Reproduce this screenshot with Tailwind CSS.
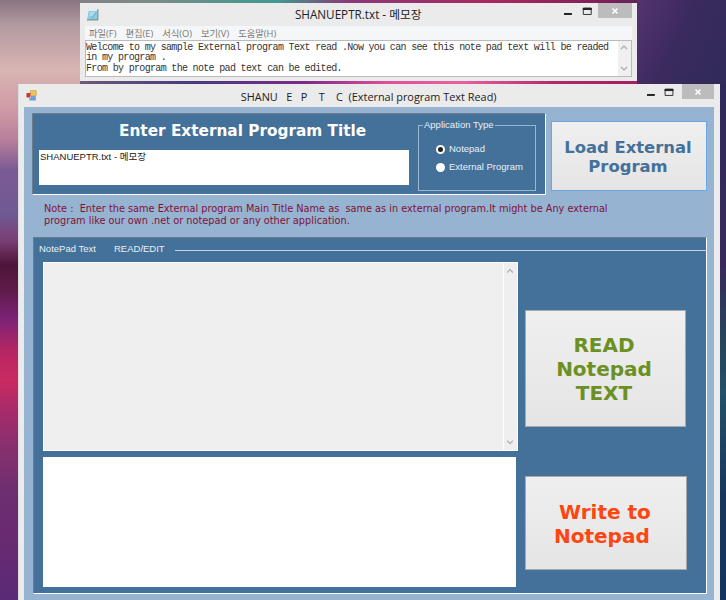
<!DOCTYPE html>
<html lang="ko">
<head>
<meta charset="utf-8">
<title>SHANU EPTC</title>
<script src="https://cdn.jsdelivr.net/npm/@tailwindcss/browser@4"></script>
</head>
<body class="overflow-hidden">
<main class="relative h-[600px] w-[726px] overflow-hidden bg-[#5c1842] font-['Open_Sans','Noto_Sans_CJK_KR',sans-serif] text-[#222]">
  <!-- desktop wallpaper -->
  <div class="absolute inset-0 bg-[linear-gradient(90deg,#8b7486_0%,#7d8a86_20%,#3f9a90_38%,#8a3a78_48%,#a8285e_68%,#7c1e58_84%,#35325f_93%,#3a2750_100%)]"></div>
  <div class="absolute top-0 left-0 h-full w-[80px] bg-[linear-gradient(180deg,#8a7482_0px,#b39aa0_25px,#d8b5b2_70px,#cf9aa6_110px,#b87f9a_140px,#7b5a94_170px,#705992_215px,#7a3f75_240px,#4e1538_265px,#5e1b4a_290px,#7c2377_320px,#b52663_350px,#c92a62_380px,#a82b6a_410px,#85306f_450px,#6e2f70_490px,#6a2a70_530px,#5a2a78_600px)]"></div>
  <div class="absolute top-[79px] left-[80px] h-[8px] w-[560px] bg-[linear-gradient(90deg,#6b5a78_0%,#473a80_20%,#7b2a88_40%,#e0509a_55%,#e861a0_68%,#b02868_85%,#a02060_100%)]"></div>
  <div class="absolute top-0 left-[637px] h-[90px] w-[89px] bg-[linear-gradient(115deg,#54336f,#3b2a5e_45%,#2f2b58)]"></div>
  <div class="absolute top-[84px] left-[720px] h-[516px] w-[6px] bg-[linear-gradient(180deg,#2f2a5b_0%,#372a5b_35%,#26455c_50%,#23506a_60%,#17365d_80%,#123460_100%)]"></div>

  <!-- notepad window -->
  <section class="absolute top-[3px] left-[80px] flex h-[78px] w-[557px] flex-col bg-[#ebebeb] px-[5px] pb-[4px]">
    <header class="flex h-[23px] shrink-0 items-start">
      <svg class="mt-[5px] ml-[2px] h-[13px] w-[12px]" viewBox="0 0 12 13"><path d="M2 1h9v11H0z" fill="#8fcbe0"/><path d="M2 1h9v2H2z" fill="#e3edf0"/><path d="M11 1v11H0" fill="none" stroke="#688892"/><path d="M3 5h5M2.500 7h4" stroke="#c4ecf6"/><path d="M5 10l4-5" stroke="#5caac8"/></svg>
      <h1 class="ml-[196px] w-[130px] text-[11.700px] leading-[23px] whitespace-pre">SHANUEPTR.txt - 메모장</h1>
      <svg class="mt-[2px] ml-[139px] h-[14px] w-[36px]" viewBox="0 0 36 14"><path d="M1 9h8" stroke="#222" stroke-width="2"/><path d="M20.500 3v6.500h8V3z" fill="none" stroke="#333"/><path d="M20 4h9" stroke="#222" stroke-width="2"/></svg>
      <div class="ml-auto flex h-[15px] w-[34px] items-center justify-center bg-[#bcbcbc]"><svg class="size-[6px]" viewBox="0 0 6 6"><path d="M.5 .5l5 5m0-5l-5 5" stroke="#fff" stroke-width="1.500"/></svg></div>
    </header>
    <nav class="flex h-[14px] shrink-0 gap-[9px] bg-[#f5f6f7] pl-[4px] text-[9.300px] leading-[15px] text-[#777]"><span>파일(F)</span><span>편집(E)</span><span>서식(O)</span><span>보기(V)</span><span>도움말(H)</span></nav>
    <div class="flex flex-1 justify-between border border-[#b9bcbf] bg-white">
      <p class="pt-[2px] font-['Liberation_Mono',monospace] text-[10px] leading-[10.300px] tracking-[-0.670px] whitespace-pre text-[#333]">Welcome to my sample External program Text read .Now you can see this note pad text will be readed
in my program .
From by program the note pad text can be edited.</p>
      <svg class="h-[35px] w-[13px] bg-[#f0f0f0]" viewBox="0 0 13 35"><path d="M3 8l3-3 3 3M3 26l3 3 3-3" fill="none" stroke="#aaa" stroke-width="1.200"/></svg>
    </div>
  </section>

  <!-- reader window -->
  <section class="absolute top-[84px] left-[18px] flex h-[530px] w-[702px] flex-col border-l border-[#dcdcdc] bg-[#ebebeb] pr-[6px] pl-[5px]">
    <header class="flex h-[23px] shrink-0 items-start">
      <svg class="mt-[6px] ml-[2px] size-[11px]" viewBox="0 0 11 11"><path d="M4.500 .5h6v5h-6z" fill="#efc456" stroke="#c99a38" stroke-width=".6"/><path d="M.5 3h4v4.500h-4z" fill="#c23a35"/><path d="M5 6h5v4.500H3.500V8H5z" fill="#6f9fd8"/></svg>
      <h2 class="mt-[2px] ml-[204px] w-[264px] text-[10.900px] leading-[22px] whitespace-pre">SHANU   E   P    T    C  (External program Text Read)</h2>
      <svg class="mt-[2px] ml-[147px] h-[14px] w-[36px]" viewBox="0 0 36 14"><path d="M1 9h8" stroke="#222" stroke-width="2"/><path d="M19.500 3v6.500h8V3z" fill="none" stroke="#333"/><path d="M19 4h9" stroke="#222" stroke-width="2"/></svg>
      <div class="ml-auto flex h-[15px] w-[33px] items-center justify-center bg-[#bcbcbc]"><svg class="size-[6px]" viewBox="0 0 6 6"><path d="M.5 .5l5 5m0-5l-5 5" stroke="#fff" stroke-width="1.500"/></svg></div>
    </header>
    <div class="flex-1 bg-[#97b3d2] pt-[6px] pl-[8px]">
      <div class="flex h-[82px] gap-[5px]">
        <div class="flex w-[514px] shrink-0 border border-t-[#6d7c8c] border-r-white border-b-white border-l-[#6d7c8c] bg-[#447199] pt-px pl-[6px]">
          <div class="w-[370px]">
            <h3 class="mt-[6px] pl-[80px] font-['DejaVu_Sans',sans-serif] text-[15.300px] leading-[20px] font-bold whitespace-pre text-white">Enter External Program Title</h3>
            <div class="mt-[9px] h-[35px] bg-white px-[1px] font-['Liberation_Sans','Noto_Sans_CJK_KR',sans-serif] text-[9.500px] leading-[13px] whitespace-pre">SHANUEPTR.txt - 메모장</div>
          </div>
          <fieldset class="mt-[3px] ml-[9px] h-[73px] w-[118px] border border-[#9ab7d0] pl-[17px] font-['Liberation_Sans',sans-serif] text-[9.500px] text-[#e8f0f7]">
            <legend class="-ml-[13px] px-[1px] leading-[14px]">Application Type</legend>
            <div class="mt-[8px] flex h-[18px] items-center gap-[4px]"><i class="flex size-[9px] items-center justify-center rounded-full bg-white"><i class="size-[5px] rounded-full bg-[#222]"></i></i>Notepad</div>
            <div class="flex h-[18px] items-center gap-[4px]"><i class="size-[9px] rounded-full bg-white"></i>External Program</div>
          </fieldset>
        </div>
        <button class="mt-[8px] h-[70px] w-[156px] border border-[#6aa5e4] bg-linear-to-b from-[#efefef] to-[#e5e5e5] pt-[1px] pr-[2px] font-['DejaVu_Sans',sans-serif] text-[16.400px] leading-[19px] font-bold whitespace-pre text-[#447199]">Load External
Program</button>
      </div>
      <p class="mt-[8px] ml-[12px] h-[34px] font-['DejaVu_Sans',sans-serif] text-[9.750px] leading-[12px] whitespace-pre text-[#7e1238]">Note :  Enter the same External program Main Title Name as  same as in external program.It might be Any external
program like our own .net or notepad or any other application.</p>
      <div class="ml-px h-[357px] w-[674px] border border-t-[#6d7c8c] border-r-white border-b-white border-l-[#6d7c8c] bg-[#447199] pt-px">
        <div class="flex h-[23px] items-center pb-[2px] pl-[5px] font-['Liberation_Sans',sans-serif] text-[9.500px] text-[#e8f0f7]"><span class="w-[75px]">NotePad Text</span><span class="w-[61px]">READ/EDIT</span><i class="mt-[2px] h-px flex-1 bg-[#c4d6e6]"></i></div>
        <div class="flex gap-[7px] pl-[9px]">
          <div class="flex w-[475px] flex-col gap-[6px]">
            <div class="flex h-[189px] justify-end border border-white bg-[#efefef]"><svg class="h-[187px] w-[14px] border-l border-white" viewBox="0 0 14 187"><path d="M3.500 9l3-3 3 3M3.500 179l3 3 3-3" fill="none" stroke="#aaa" stroke-width="1.200"  transform="matrix(1 0 0 1.065 0 -6.500)"/></svg></div>
            <div class="h-[130px] w-[473px] bg-white"></div>
          </div>
          <div class="flex flex-col gap-[49px] pt-[48px] font-['DejaVu_Sans',sans-serif] font-bold">
            <button class="h-[117px] w-[161px] border border-[#a9a9a9] bg-linear-to-b from-[#efefef] to-[#e5e5e5] pt-[1px] pr-[3px] text-[20px] leading-[24px] whitespace-pre text-[#6b9023]">READ
Notepad
TEXT</button>
            <button class="flex h-[94px] w-[162px] flex-col items-start justify-center border border-[#a9a9a9] bg-linear-to-b from-[#efefef] to-[#e5e5e5] pt-[1px] pl-[28px] text-[20px] leading-[24px] text-[#ff4510]"><span class="pl-[5px]">Write to</span><span>Notepad</span></button>
          </div>
        </div>
      </div>
    </div>
  </section>
</main>
</body>
</html>
